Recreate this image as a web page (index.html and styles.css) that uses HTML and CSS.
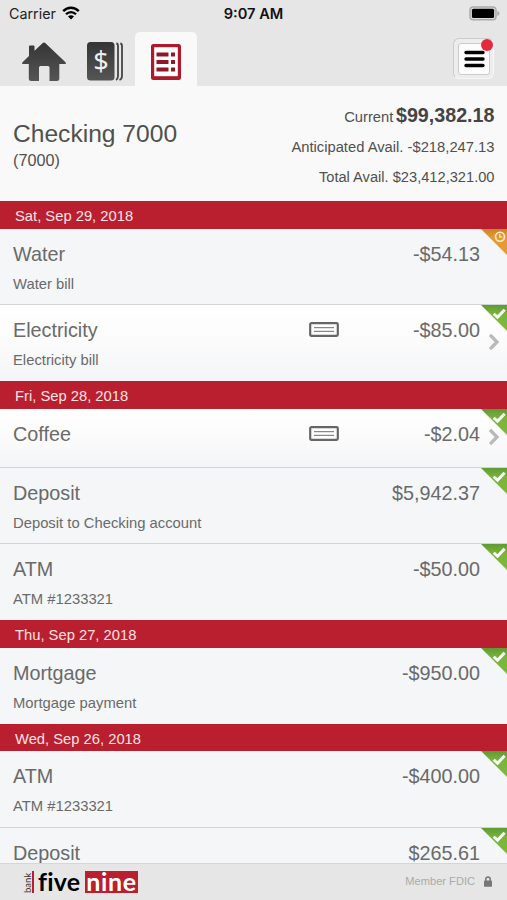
FILE: index.html
```
<!DOCTYPE html>
<html lang="en">
<head>
  <meta charset="UTF-8" />
  <title>Checking 7000</title>
  <link rel="stylesheet" href="styles.css">
</head>
<body>
  <!-- shared icons -->
  <svg class="defs" width="0" height="0">
    <defs>
      <linearGradient id="dark" x1="0" y1="0" x2="0" y2="1">
        <stop offset="0" stop-color="#353535" />
        <stop offset="1" stop-color="#555" />
      </linearGradient>
      <linearGradient id="green" x1="0" y1="0" x2="0" y2="1">
        <stop offset="0" stop-color="#5f9a33" />
        <stop offset="0.35" stop-color="#79b53b" />
        <stop offset="1" stop-color="#7eb93f" />
      </linearGradient>
      <linearGradient id="orange" x1="0" y1="0" x2="0" y2="1">
        <stop offset="0" stop-color="#c9852b" />
        <stop offset="0.35" stop-color="#e69a33" />
        <stop offset="1" stop-color="#e39a36" />
      </linearGradient>
      <symbol id="cleared" viewBox="0 0 26 26">
        <path d="M0 0H26V26Z" fill="url(#green)" />
        <path d="M12.7 8.7L16.6 12.3L23.6 4.8" fill="none" stroke="#fff" stroke-width="2.9" />
      </symbol>
      <symbol id="pending" viewBox="0 0 26 26">
        <path d="M0 0H26V26Z" fill="url(#orange)" />
        <circle cx="19" cy="7.7" r="4.5" fill="none" stroke="#fff0cf" stroke-width="1.6" />
        <path d="M18.8 5V8H21.3" fill="none" stroke="#fff0cf" stroke-width="1.2" />
      </symbol>
      <symbol id="check" viewBox="0 0 30 15">
        <rect x="1.2" y="1.2" width="27.6" height="12.6" rx="1.2" fill="#fff" stroke="#666" stroke-width="2.2" />
        <path d="M5 5.6H25M5 9.4H25" stroke="#888" stroke-width="1.4" />
      </symbol>
      <symbol id="arrow" viewBox="0 0 12 18">
        <path d="M2 1.8L9 9L2 16.2" fill="none" stroke="#b9b9b9" stroke-width="3.3" />
      </symbol>
    </defs>
  </svg>

  <div class="screen">
    <header class="top">
      <div class="status">
        <div class="carrier">
          <span>Carrier</span>
          <svg width="18" height="14" viewBox="0 0 18 14">
            <path d="M1.2 5.2C5.6 .6 12.4 .6 16.8 5.2" fill="none" stroke="#000" stroke-width="2.4" />
            <path d="M4 8.2C6.8 5.3 11.2 5.3 14 8.2" fill="none" stroke="#000" stroke-width="2.3" />
            <path d="M6 10.4C7.7 8.8 10.3 8.8 12 10.4L9 13.5Z" />
          </svg>
        </div>
        <div class="clock">9:07 AM</div>
        <div class="battery">
          <svg width="31" height="15" viewBox="0 0 31 15">
            <rect x="1" y="1" width="26" height="12.8" rx="3.3" fill="#ddd" stroke="#aaa" stroke-width="1.5" />
            <rect x="2.9" y="2.8" width="22.2" height="9.2" rx="1.5" />
            <path d="M28.3 5V10C31.2 9 31.2 6 28.3 5Z" fill="#aaa" />
          </svg>
        </div>
      </div>
      <nav class="nav">
        <a class="tab home">
          <svg width="46" height="40" viewBox="0 0 46 40">
            <path d="M21.5 1.2Q23 0 24.5 1.2L44.5 20.2Q45.6 22 43.8 22H38.3V36.5Q38.3 39 35.8 39H28.5V25.5Q28.5 24 27 24H19.5Q18 24 18 25.5V39H10.3Q7.8 39 7.8 36.5V22H2.2Q.4 22 1.5 20.2L8 14V4.5Q8 3.5 9 3.5H12.5Q13.5 3.5 13.5 4.5V8.8Z" fill="url(#dark)" />
          </svg>
        </a>
        <a class="tab accounts">
          <svg width="37" height="39" viewBox="0 0 37 39">
            <path d="M29.3 1.5Q31 1.5 31 4V34Q31 37 29 38M33.3 1.5Q35 1.8 35 4V34Q35 37 32.5 38" fill="none" stroke="#444" stroke-width="1.8" />
            <rect x="0" y="0" width="27.5" height="38.5" rx="3.5" fill="url(#dark)" />
            <text class="dollar" x="14" y="28.5">$</text>
          </svg>
        </a>
        <a class="tab active">
          <svg width="30" height="36" viewBox="0 0 30 36">
            <rect x="0" y="0" width="30" height="36" rx="2.5" fill="#ac1a2b" />
            <rect x="3.2" y="3.2" width="23.6" height="29" fill="#fff" />
            <path d="M5.5 10.5H17.5M20 10.5H24M5.5 18H17.5M20 18H24M5.5 25.5H17.5M20 25.5H24" stroke="#8e1828" stroke-width="3.8" />
          </svg>
        </a>
        <button class="menu">
          <span class="menu-face">
            <svg width="21" height="18" viewBox="0 0 21 18">
              <path d="M2 2.5H19M2 9H19M2 15.5H19" stroke="#000" stroke-width="3.4" stroke-linecap="round" />
            </svg>
          </span>
          <span class="badge"></span>
        </button>
      </nav>
    </header>

    <section class="account">
      <div class="account-name">
        <h1>Checking 7000</h1>
        <p>(7000)</p>
      </div>
      <div class="balances">
        <div class="current">Current <b>$99,382.18</b></div>
        <div>Anticipated Avail. -$218,247.13</div>
        <div class="total">Total Avail. $23,412,321.00</div>
      </div>
    </section>

    <main class="list">
      <h2 class="date">Sat, Sep 29, 2018</h2>
      <div class="row">
        <div class="line"><span>Water</span><span>-$54.13</span></div>
        <div class="memo">Water bill</div>
        <svg class="flag"><use href="#pending" /></svg>
      </div>
      <div class="row link">
        <div class="line"><span>Electricity</span><svg class="check"><use href="#check" /></svg><span>-$85.00</span></div>
        <div class="memo">Electricity bill</div>
        <svg class="flag"><use href="#cleared" /></svg>
        <svg class="arrow"><use href="#arrow" /></svg>
      </div>

      <h2 class="date">Fri, Sep 28, 2018</h2>
      <div class="row link short">
        <div class="line"><span>Coffee</span><svg class="check"><use href="#check" /></svg><span>-$2.04</span></div>
        <svg class="flag"><use href="#cleared" /></svg>
        <svg class="arrow"><use href="#arrow" /></svg>
      </div>
      <div class="row">
        <div class="line"><span>Deposit</span><span>$5,942.37</span></div>
        <div class="memo">Deposit to Checking account</div>
        <svg class="flag"><use href="#cleared" /></svg>
      </div>
      <div class="row">
        <div class="line"><span>ATM</span><span>-$50.00</span></div>
        <div class="memo">ATM #1233321</div>
        <svg class="flag"><use href="#cleared" /></svg>
      </div>

      <h2 class="date">Thu, Sep 27, 2018</h2>
      <div class="row">
        <div class="line"><span>Mortgage</span><span>-$950.00</span></div>
        <div class="memo">Mortgage payment</div>
        <svg class="flag"><use href="#cleared" /></svg>
      </div>

      <h2 class="date">Wed, Sep 26, 2018</h2>
      <div class="row">
        <div class="line"><span>ATM</span><span>-$400.00</span></div>
        <div class="memo">ATM #1233321</div>
        <svg class="flag"><use href="#cleared" /></svg>
      </div>
      <div class="row">
        <div class="line"><span>Deposit</span><span>$265.61</span></div>
        <svg class="flag"><use href="#cleared" /></svg>
      </div>
    </main>

    <footer class="footer">
      <div class="logo">
        <span class="bank">bank</span>
        <span class="five">five</span>
        <span class="nine">nine</span>
      </div>
      <div class="fdic">
        <span>Member FDIC</span>
        <svg width="8" height="11" viewBox="0 0 8 11">
          <path d="M1.8 5V3.2C1.8 .2 6.2 .2 6.2 3.2V5" fill="none" stroke="#777" stroke-width="1.5" />
          <rect x="0" y="4.6" width="8" height="6.2" rx=".8" fill="#777" />
        </svg>
      </div>
    </footer>
  </div>
</body>
</html>
```

FILE: styles.css
```
* { box-sizing: border-box; }

body {
  margin: 0;
  font-family: "Liberation Sans", Arial, sans-serif;
  color: #6a6a6a;
  background: #f4f6f8;
}

h1, h2, p {
  margin: 0;
  font-weight: normal;
}

svg { display: block; }

.defs { position: absolute; }

.screen {
  display: flex;
  flex-direction: column;
  height: 900px;
  overflow: hidden;
}

/* top bar */
.top {
  height: 86px;
  flex: none;
  background: #e6e6e6;
}

.status {
  display: grid;
  grid-template-columns: 1fr auto 1fr;
  align-items: center;
  height: 27px;
  padding: 0 7px 0 9px;
  font-family: Inter, sans-serif;
  font-size: 14.3px;
  color: #222;
}

.carrier {
  display: flex;
  align-items: center;
  gap: 6px;
}

.carrier svg { margin-bottom: 2px; }

.clock {
  margin-right: 2px;
  font-size: 14.6px;
  font-weight: 600;
  color: #111;
}

.battery {
  display: flex;
  justify-content: flex-end;
}

.nav {
  display: flex;
  height: 59px;
  padding: 5px 13px 0 20px;
}

.tab.home { padding: 10px 0 0 1px; width: 67px; }
.tab.accounts { padding: 10px 0 0; width: 48px; }

.tab.active {
  width: 62px;
  height: 54px;
  padding: 12px 0 0 16px;
  border-radius: 5px 5px 0 0;
  background: #f9f9f9;
}

.dollar {
  font-family: "Noto Sans", sans-serif;
  font-size: 27px;
  text-anchor: middle;
  fill: #eee;
}

.menu {
  position: relative;
  width: 41px;
  height: 41px;
  margin: 6px 0 0 auto;
  padding: 4px;
  border: 1px solid #ccc;
  border-right-color: #f6f6f6;
  border-bottom-color: #f6f6f6;
  border-radius: 6px;
  background: #ededed;
}

.menu-face {
  display: flex;
  align-items: center;
  justify-content: center;
  width: 32px;
  height: 32px;
  border: 1px solid #ccc;
  border-radius: 3px;
  background: #fcfcfc;
}

.badge {
  position: absolute;
  top: 0;
  right: 0;
  width: 12px;
  height: 12px;
  border-radius: 50%;
  background: #e6283c;
}

/* account summary */
.account {
  display: flex;
  justify-content: space-between;
  flex: none;
  height: 115px;
  padding: 0 12.5px 0 13px;
  background: #f9f9f9;
  color: #505050;
}

.account-name { padding-top: 34px; }

.account-name h1 {
  font-size: 24.6px;
  line-height: 28px;
}

.account-name p {
  font-size: 16.2px;
  line-height: 24px;
}

.balances {
  padding-top: 15px;
  font-size: 14.75px;
  line-height: 29.5px;
  text-align: right;
}

.current { word-spacing: -1.5px; }

.total {
  font-size: 14.65px;
  line-height: 31px;
}

.balances b {
  font-size: 19.7px;
  color: #444;
}

/* transactions */
.list {
  flex: 1;
  min-height: 0;
  overflow: hidden;
}

.date {
  height: 27.5px;
  padding-left: 15px;
  font-size: 14.75px;
  line-height: 30px;
  color: #fbe3e5;
  background: #b91f2f;
}

.row {
  position: relative;
  height: 76.25px;
  padding: 13px 27px 0 13px;
  background: #f4f6f8;
}

.row:has(+ .row) { border-bottom: 1.5px solid #d0d4d6; }

.row.link { background: linear-gradient(#fff, #fbfbfb 50%, #f4f5f8); }

.row.short { height: 59px; }

.line {
  display: flex;
  justify-content: space-between;
  font-size: 19.8px;
  line-height: 24px;
}

.line .check {
  width: 30px;
  height: 15px;
  margin: 4px 0 0 auto;
}

.line .check + span {
  width: 141px;
  text-align: right;
}

.memo {
  margin-top: 9px;
  font-size: 14.8px;
  line-height: 18px;
}

.flag {
  position: absolute;
  top: 0;
  right: 0;
  width: 26px;
  height: 26px;
}

.arrow {
  position: absolute;
  top: 28px;
  right: 7px;
  width: 12px;
  height: 18px;
}

.short .arrow { top: 19px; }

/* footer */
.footer {
  display: flex;
  align-items: center;
  justify-content: space-between;
  flex: none;
  height: 37px;
  padding: 0 15px 0 24px;
  border-top: 1px solid #d4d7d6;
  background: #e6e6e6;
}

.logo {
  display: flex;
  height: 22px;
  font-family: Lato, sans-serif;
  font-size: 25px;
  font-weight: bold;
  line-height: 21px;
  font-variant-ligatures: none;
}

.bank {
  width: 10px;
  border-left: 2px solid #b91f2f;
  font-size: 9.5px;
  font-weight: normal;
  line-height: 8px;
  color: #333;
  writing-mode: vertical-rl;
  transform: rotate(180deg);
}

.five {
  width: 51px;
  padding-left: 4px;
  letter-spacing: .2px;
  color: #000;
}

.nine {
  width: 53px;
  letter-spacing: .6px;
  color: #fff;
  background: #b91f2f;
  text-align: center;
}

.fdic {
  display: flex;
  align-items: center;
  gap: 9px;
  padding-bottom: 2px;
  font-size: 11.1px;
  color: #aaa;
}
```
